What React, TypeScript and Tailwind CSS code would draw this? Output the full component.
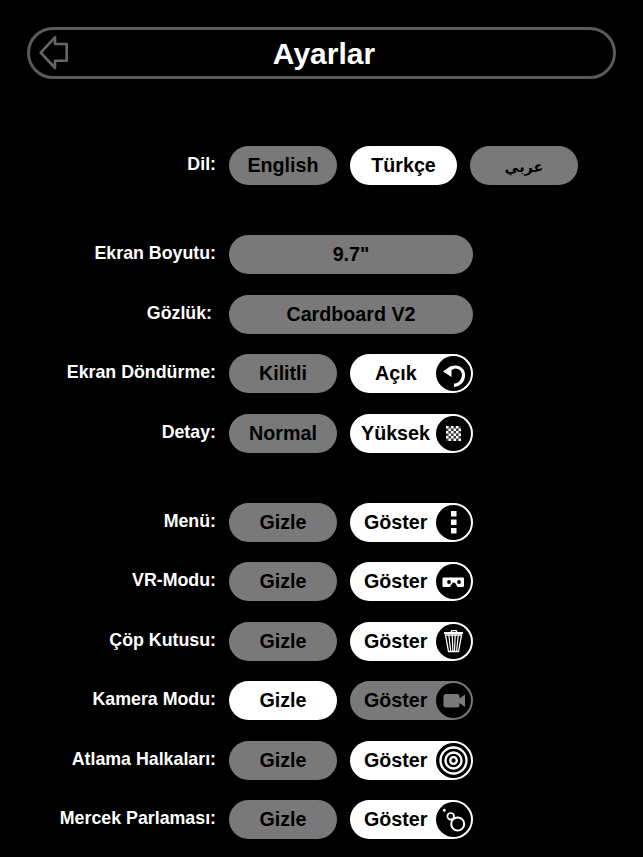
const font = { fontFamily: '"Liberation Sans", Arial, sans-serif' };

type IconProps = { children: React.ReactNode };

function IconDisc({ children }: IconProps) {
    return (
        <div className="absolute right-[2px] top-[2px] w-[35px] h-[35px] rounded-full bg-black flex items-center justify-center">
            <svg width="35" height="35" viewBox="0 0 35 35">{children}</svg>
        </div>
    );
}

function Pill({ label, on, wide, icon, textClass }: { label: React.ReactNode; on?: boolean; wide?: string; icon?: React.ReactNode; textClass?: string }) {
    return (
        <div className={`relative h-[39px] rounded-full flex items-center text-black ${wide ?? 'w-[108px]'} ${on ? 'bg-white' : 'bg-[#797979]'}`}>
            <span className={`font-bold text-[19.7px] leading-none whitespace-nowrap pt-[1px] ${textClass ?? 'w-full text-center'}`}>{label}</span>
            {icon && <IconDisc>{icon}</IconDisc>}
        </div>
    );
}

function Row({ label, children, className, labelClass }: { label: string; children: React.ReactNode; className?: string; labelClass?: string }) {
    return (
        <div className={`flex items-start ${className ?? 'mt-[20.5px]'}`}>
            <div className={`w-[216px] text-right text-white font-bold text-[17.8px] leading-[19px] pt-[9px] whitespace-nowrap ${labelClass ?? ''}`}>{label}</div>
            <div className="ml-[13px] flex gap-[13px]">{children}</div>
        </div>
    );
}

const rotateIcon = (
    <>
        <path d="M14.5 13 C20 8.5 27.5 12.5 27.5 19 C27.5 25 23 29 18 29.3" fill="none" stroke="white" strokeWidth="3.2" />
        <path d="M7 15.5 L15.5 9.5 L15.5 21 Z" fill="white" />
    </>
);

const checkerIcon = (
    <g fill="white">
        <rect x="10" y="10" width="15" height="15" fillOpacity="0.22" />
        {[0, 1, 2, 3, 4, 5].map(r =>
            [0, 1, 2, 3, 4, 5].map(c =>
                (r + c) % 2 === 0 ? <rect key={`${r}-${c}`} x={10 + c * 2.5} y={10 + r * 2.5} width="2.5" height="2.5" /> : null
            )
        )}
    </g>
);

const menuIcon = (
    <g fill="white">
        <rect x="15" y="6" width="5.5" height="5.5" />
        <rect x="15" y="14.5" width="5.5" height="5.5" />
        <rect x="15" y="23" width="5.5" height="5.5" />
    </g>
);

const vrIcon = (
    <>
        <path d="M7.5 13.5 H27 a1 1 0 0 1 1 1 V22 a1 1 0 0 1 -1 1 H21.5 L19.5 19.5 a2 2 0 0 0 -3.5 0 L14 23 H7.5 a1 1 0 0 1 -1 -1 V14.5 a1 1 0 0 1 1 -1 Z" fill="white" />
        <circle cx="13" cy="18" r="1.9" fill="black" />
        <circle cx="23" cy="18" r="1.9" fill="black" />
    </>
);

const trashIcon = (
    <g fill="none" stroke="white">
        <path d="M15 8 L16 6.6 H20 L21 8" strokeWidth="1.3" />
        <path d="M8 9 H27" strokeWidth="2" />
        <path d="M9.5 11 L12.5 27.5 H22.5 L25.5 11 Z" strokeWidth="1.3" />
        <path d="M12.8 11 L14.7 27 M16.2 11 L16.9 27 M19.2 11 L18.5 27 M22.4 11 L20.5 27" strokeWidth="1.2" />
    </g>
);

const cameraIcon = (
    <path d="M10 11 H21 a2.5 2.5 0 0 1 2.5 2.5 V15.5 L29 11.5 V24 L23.5 20 V22 a2.5 2.5 0 0 1 -2.5 2.5 H10 a2.5 2.5 0 0 1 -2.5 -2.5 V13.5 A2.5 2.5 0 0 1 10 11 Z" fill="#797979" />
);

const ringsIcon = (
    <g fill="none" stroke="white" strokeWidth="2.3">
        <circle cx="17.5" cy="17.5" r="13" />
        <circle cx="17.5" cy="17.5" r="8" />
        <circle cx="17.5" cy="17.5" r="3.3" />
    </g>
);

const flareIcon = (
    <g fill="none" stroke="white" strokeWidth="1.7">
        <circle cx="8.3" cy="8.3" r="1.2" fill="white" strokeWidth="0.6" />
        <circle cx="14.7" cy="14.3" r="3.3" />
        <circle cx="21.7" cy="22" r="6.5" strokeWidth="2" />
    </g>
);

export default function App() {
    return (
        <div className="w-[643px] h-[857px] bg-black overflow-hidden pt-[27px]" style={font}>
            <div className="relative mx-[27px] w-[589px] h-[52px] rounded-full border-[3px] border-[#5a5a5a] flex items-center justify-center pl-[5px]">
                <svg className="absolute left-[8px] top-[5px]" width="30" height="36" viewBox="0 0 30 36" fill="none">
                    <path d="M17 2.3 L2.7 17.7 L17 33 V25.7 H28.7 V9 H17 Z" stroke="#666666" strokeWidth="2.6" strokeLinejoin="round" />
                </svg>
                <span className="text-white font-bold text-[30px] leading-none pt-[1px]">Ayarlar</span>
            </div>

            <Row label="Dil:" className="mt-[67px]">
                <Pill label="English" />
                <Pill label="Türkçe" on wide="w-[107px]" />
                <Pill
                    label={<span style={{ fontFamily: '"DejaVu Sans", sans-serif' }}>عربي</span>}
                    textClass="w-full text-center text-[14.5px]! pt-[4px]!"
                />
            </Row>

            <Row label="Ekran Boyutu:" className="mt-[50px]">
                <Pill label={'9.7"'} wide="w-[244px]" />
            </Row>
            <Row label="Gözlük:" labelClass="pr-[4px]">
                <Pill label="Cardboard V2" wide="w-[244px]" />
            </Row>
            <Row label="Ekran Döndürme:">
                <Pill label="Kilitli" />
                <Pill label="Açık" on wide="w-[123px]" icon={rotateIcon} textClass="ml-[25px]" />
            </Row>
            <Row label="Detay:">
                <Pill label="Normal" />
                <Pill label="Yüksek" on wide="w-[123px]" icon={checkerIcon} textClass="ml-[11px]" />
            </Row>

            <Row label="Menü:" className="mt-[50px]">
                <Pill label="Gizle" />
                <Pill label="Göster" on wide="w-[123px]" icon={menuIcon} textClass="ml-[14px]" />
            </Row>
            <Row label="VR-Modu:">
                <Pill label="Gizle" />
                <Pill label="Göster" on wide="w-[123px]" icon={vrIcon} textClass="ml-[14px]" />
            </Row>
            <Row label="Çöp Kutusu:">
                <Pill label="Gizle" />
                <Pill label="Göster" on wide="w-[123px]" icon={trashIcon} textClass="ml-[14px]" />
            </Row>
            <Row label="Kamera Modu:">
                <Pill label="Gizle" on />
                <Pill label="Göster" wide="w-[123px]" icon={cameraIcon} textClass="ml-[14px]" />
            </Row>
            <Row label="Atlama Halkaları:">
                <Pill label="Gizle" />
                <Pill label="Göster" on wide="w-[123px]" icon={ringsIcon} textClass="ml-[14px]" />
            </Row>
            <Row label="Mercek Parlaması:">
                <Pill label="Gizle" />
                <Pill label="Göster" on wide="w-[123px]" icon={flareIcon} textClass="ml-[14px]" />
            </Row>
        </div>
    );
}
